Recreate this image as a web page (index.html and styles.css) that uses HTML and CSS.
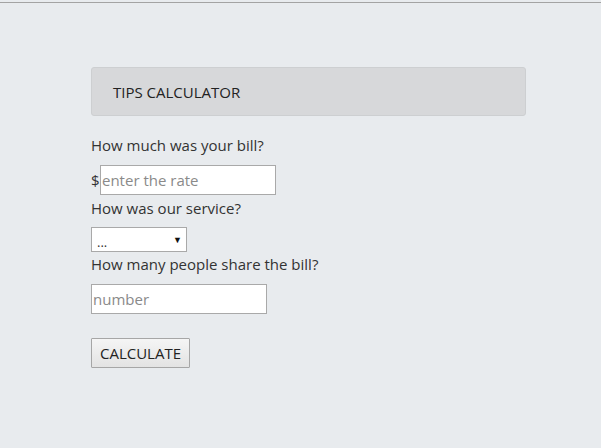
FILE: index.html
```html
<!DOCTYPE html>
<html>
<head>
<meta charset="utf-8">
<link rel="stylesheet" href="styles.css">
</head>
<body>
<div class="page">
  <div class="topline"></div>
  <div class="container">
    <div class="panel">TIPS CALCULATOR</div>
    <p class="label first">How much was your bill?</p>
    <div class="bill-row"><span class="dollar">$</span><input class="field bill" type="text" placeholder="enter the rate"></div>
    <p class="label">How was our service?</p>
    <div class="select"><span class="sel-text">...</span><span class="arrow">▼</span></div>
    <p class="label">How many people share the bill?</p>
    <input class="field people" type="text" placeholder="number">
    <div><button class="btn">CALCULATE</button></div>
  </div>
</div>
</body>
</html>
```
FILE: styles.css
```css
html, body {
  margin: 0;
  padding: 0;
  background: #ffffff;
}
.page {
  width: 601px;
  height: 448px;
  background: #e8ebee;
  font-family: "Open Sans", "Noto Sans", sans-serif;
  color: #333;
  overflow: hidden;
}
.topline {
  margin-top: 2px;
  height: 1px;
  background: #a3a3a3;
}
.container {
  padding: 64px 0 0 91px;
}
.panel {
  width: 435px;
  height: 49px;
  box-sizing: border-box;
  background: #d7d8da;
  border: 1px solid #cdcfd1;
  border-radius: 3px;
  padding: 0 0 0 21px;
  line-height: 48px;
  font-size: 15px;
  color: #222;
}
.label {
  margin: 0;
  font-size: 15px;
  line-height: 20px;
  color: #333;
}
.label.first {
  margin-top: 19px;
}
.bill-row {
  display: flex;
  align-items: center;
  margin-top: 10px;
  height: 30px;
}
.dollar {
  font-size: 15px;
  width: 9px;
  color: #333;
}
.field {
  box-sizing: border-box;
  width: 176px;
  height: 30px;
  border: 1px solid #a9a9a9;
  background: #fff;
  padding: 0 1px;
  font-family: "Open Sans", "Noto Sans", sans-serif;
  font-size: 15px;
  outline: none;
}
.field::placeholder {
  color: #8a8a8a;
}
.bill-row + .label {
  margin-top: 3px;
}
.select {
  box-sizing: border-box;
  width: 96px;
  height: 25px;
  margin-top: 9px;
  border: 1px solid #a9a9a9;
  background: #fff;
  display: flex;
  align-items: center;
  justify-content: space-between;
  padding: 0 4px 0 5px;
  font-size: 13px;
}
.sel-text {
  margin-top: 4px;
}
.arrow {
  font-size: 9px;
  color: #111;
}
.select + .label {
  margin-top: 2px;
}
.people {
  display: block;
  margin-top: 10px;
}
.btn {
  margin-top: 24px;
  box-sizing: border-box;
  width: 99px;
  height: 30px;
  border: 1px solid #a6a6a6;
  border-radius: 1px;
  background: linear-gradient(#f5f5f5, #e3e3e3);
  font-family: "Open Sans", "Noto Sans", sans-serif;
  font-size: 15px;
  color: #222;
  padding: 0;
}
```
